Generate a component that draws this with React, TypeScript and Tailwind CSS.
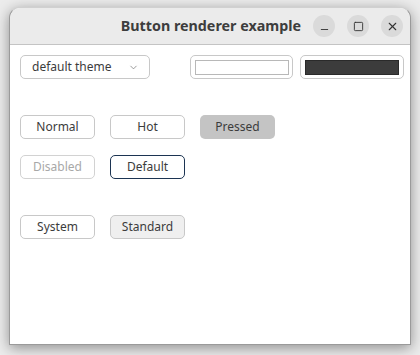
import { ChevronDown, Minus, Square, X } from "lucide-react"

const font = { fontFamily: '"Noto Sans", "DejaVu Sans", sans-serif' }

function Btn({
  label,
  className,
}: {
  label: string
  className: string
}) {
  return (
    <div
      className={
        "h-[24px] w-[75px] rounded-[5px] flex items-center justify-center text-[12px] " +
        className
      }
    >
      {label}
    </div>
  )
}

export default function App() {
  return (
    <div className="w-[420px] h-[355px] bg-[#ececec] pt-[7px] pl-[9px] overflow-hidden" style={font}>
      <div className="w-[402px] h-[338px] rounded-t-[11px] bg-white border border-[#9a9a9a] border-t-[#d0d0d0] shadow-[0_3px_14px_rgba(0,0,0,0.4)] flex flex-col overflow-hidden">
        {/* title bar */}
        <div className="h-[37px] bg-[#ebebeb] border-b border-[#c4c4c4] flex items-center pr-[7px]">
          <div className="flex-1 text-right pr-[12px] text-[14.3px] font-bold text-[#3d3d3d]">
            Button renderer example
          </div>
          <div className="flex gap-[12px]">
            <div className="w-[22px] h-[22px] rounded-full bg-[#dadada] flex items-center justify-center">
              <Minus className="w-[11px] h-[11px] text-[#333] mt-[6px]" strokeWidth={2} />
            </div>
            <div className="w-[22px] h-[22px] rounded-full bg-[#dadada] flex items-center justify-center">
              <Square className="w-[11px] h-[11px] text-[#333]" strokeWidth={2} />
            </div>
            <div className="w-[22px] h-[22px] rounded-full bg-[#dadada] flex items-center justify-center">
              <X className="w-[13px] h-[13px] text-[#333]" strokeWidth={2} />
            </div>
          </div>
        </div>

        {/* content */}
        <div className="flex-1 pl-[10px] pr-[6px] pt-[10px] text-[#3c3c3c]">
          <div className="flex items-center">
            <div className="h-[24px] w-[130px] rounded-[5px] border border-[#c8c8c8] flex items-center pl-[11px] pr-[10px] text-[12px]">
              <span className="flex-1">default theme</span>
              <ChevronDown className="w-[11px] h-[11px] text-[#777]" strokeWidth={1.6} />
            </div>
            <div className="ml-[40px] h-[24px] w-[103px] rounded-[5px] border border-[#c8c8c8] flex items-center justify-center">
              <div className="w-[94px] h-[15px] bg-white border border-[#b8b8b8]" />
            </div>
            <div className="ml-[7px] h-[24px] w-[104px] rounded-[5px] border border-[#c8c8c8] flex items-center justify-center">
              <div className="w-[94px] h-[15px] bg-[#3c3c3c] border border-[#2a2a2a]" />
            </div>
          </div>

          <div className="mt-[36px] flex gap-[15px]">
            <Btn label="Normal" className="border border-[#c8c8c8] bg-white" />
            <Btn label="Hot" className="border border-[#c8c8c8] bg-white" />
            <Btn label="Pressed" className="bg-[#c4c4c4]" />
          </div>
          <div className="mt-[16px] flex gap-[15px]">
            <Btn label="Disabled" className="border border-[#d2d2d2] bg-white text-[#a8a8a8]" />
            <Btn label="Default" className="border border-[#1c3452] bg-white" />
          </div>
          <div className="mt-[36px] flex gap-[15px]">
            <Btn label="System" className="border border-[#c8c8c8] bg-white" />
            <Btn label="Standard" className="border border-[#c8c8c8] bg-[#efefef]" />
          </div>
        </div>
      </div>
    </div>
  )
}
